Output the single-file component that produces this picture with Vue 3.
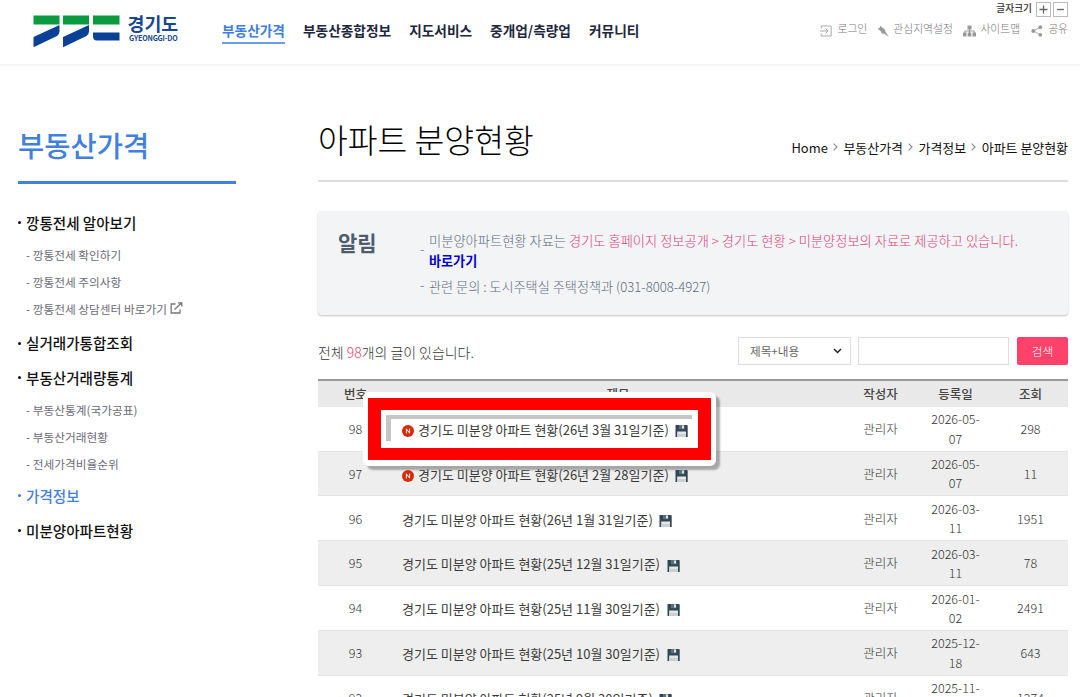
<script setup>
import { ref } from 'vue'

const menus = ['부동산가격', '부동산종합정보', '지도서비스', '중개업/측량업', '커뮤니티']

const sideMenus = [
  {
    name: '깡통전세 알아보기',
    children: [
      { name: '깡통전세 확인하기' },
      { name: '깡통전세 주의사항' },
      { name: '깡통전세 상담센터 바로가기', external: true }
    ]
  },
  { name: '실거래가통합조회' },
  {
    name: '부동산거래량통계',
    children: [
      { name: '부동산통계(국가공표)' },
      { name: '부동산거래현황' },
      { name: '전세가격비율순위' }
    ]
  },
  { name: '가격정보', active: true },
  { name: '미분양아파트현황' }
]

const crumbs = ['Home', '부동산가격', '가격정보', '아파트 분양현황']

const posts = [
  { no: 98, period: '26년 3월 31일', date: '2026-05-07', views: 298, isNew: true, marked: true },
  { no: 97, period: '26년 2월 28일', date: '2026-05-07', views: 11, isNew: true },
  { no: 96, period: '26년 1월 31일', date: '2026-03-11', views: 1951 },
  { no: 95, period: '25년 12월 31일', date: '2026-03-11', views: 78 },
  { no: 94, period: '25년 11월 30일', date: '2026-01-02', views: 2491 },
  { no: 93, period: '25년 10월 30일', date: '2025-12-18', views: 643 },
  { no: 92, period: '25년 9월 30일', date: '2025-11-03', views: 1274 }
]

const keyword = ref('')
</script>

<template>
  <div class="page">
    <header class="header">
      <a class="logo">
        <svg width="88" height="33" viewBox="0 0 88 33">
          <g fill="#0b9a3f">
            <path d="M0.5 0.5H26.5V9.5H0.5z" />
            <path d="M30 0.5H56V9.5H30z" />
            <path d="M60 0.5H86.5V9.5H60z" />
          </g>
          <g fill="#0a4197">
            <path d="M26.5 10V16.5Q26.5 19.5 24 21L0.5 32.3V22z" />
            <path d="M56 10V16.5Q56 19.5 53.5 21L30 32.3V22z" />
            <path d="M60 17.5H86.5V25.5H64Q60 25.5 60 21z" />
          </g>
        </svg>
        <span class="logo-text">
          <strong>경기도</strong>
          <em>GYEONGGI-DO</em>
        </span>
      </a>

      <nav class="gnb">
        <a v-for="(menu, i) in menus" :key="menu" :class="{ on: i === 0 }">{{ menu }}</a>
      </nav>

      <div class="util">
        <div class="font-size">
          <span>글자크기</span>
          <button><svg width="9" height="9" viewBox="0 0 9 9"><path d="M0.5 4.5h8M4.5 0.5v8" stroke="#666" stroke-width="1.3" /></svg></button>
          <button><svg width="9" height="9" viewBox="0 0 9 9"><path d="M1 4.5h7" stroke="#666" stroke-width="1.3" /></svg></button>
        </div>
        <div class="links">
          <a>
            <svg width="12" height="12" viewBox="0 0 12 12" fill="none" stroke="#aaa"><path d="M1.2 3.5V1H11.2V11H1.2V8.5M0 6H8M5.5 3.5L8 6L5.5 8.5" /></svg>
            <span>로그인</span>
          </a>
          <a class="gap-pin">
            <svg width="12" height="12" viewBox="0 0 12 12"><path d="M3.2 0.8L5.2 2.6L7.6 4.2L8.6 7L11.8 11.8L6.8 8.6L4.6 8.4L3.8 6.2L0.5 3.6L2.6 3z" fill="#999" /></svg>
            <span>관심지역설정</span>
          </a>
          <a class="gap-map">
            <svg width="13" height="12" viewBox="0 0 13 12"><path d="M4.5 0.5h4v4h-4zM0 7.5h3.5v4H0zM4.7 7.5h3.6v4H4.7zM9.5 7.5H13v4H9.5z" fill="#999" /><path d="M6.5 4v4M1.8 8V6h9.4v2" fill="none" stroke="#999" /></svg>
            <span>사이트맵</span>
          </a>
          <a class="gap-share">
            <svg width="12" height="12" viewBox="0 0 12 12"><path d="M9.3 2.2L2.5 6L9.3 9.8" fill="none" stroke="#999" stroke-width="0.8" /><g fill="#999"><circle cx="9.3" cy="2.2" r="1.9" /><circle cx="2.3" cy="6" r="2" /><circle cx="9.3" cy="9.8" r="1.9" /></g></svg>
            <span>공유</span>
          </a>
        </div>
      </div>
    </header>

    <div class="container">
      <aside class="side">
        <h2>부동산가격</h2>
        <ul class="side-list">
          <li v-for="menu in sideMenus" :key="menu.name">
            <a class="side-item" :class="{ active: menu.active }"><i></i>{{ menu.name }}</a>
            <ul v-if="menu.children" class="sub-list">
              <li v-for="child in menu.children" :key="child.name" :class="{ external: child.external }">
                - {{ child.name }}
                <svg v-if="child.external" width="13" height="12" viewBox="0 0 13 12" fill="none" stroke="#777" stroke-width="1.3"><path d="M5.5 2H1.2V11H10V7.5" /><path d="M4.5 7.5L11.5 1M8 0.8H11.8V4.6" /></svg>
              </li>
            </ul>
          </li>
        </ul>
      </aside>

      <main class="content">
        <div class="title-bar">
          <h1>아파트 분양현황</h1>
          <div class="crumbs">
            <template v-for="(crumb, i) in crumbs" :key="crumb">
              <svg v-if="i > 0" width="5" height="8" viewBox="0 0 5 8"><path d="M0.7 0.7L4 4L0.7 7.3" fill="none" stroke="#888" stroke-width="1.1" /></svg>
              <span>{{ crumb }}</span>
            </template>
          </div>
        </div>

        <section class="notice">
          <h3>알림</h3>
          <ul>
            <li>
              <span class="dash">-</span>
              <p class="wide">미분양아파트현황 자료는 <span class="pink">경기도 홈페이지 정보공개 &gt; 경기도 현황 &gt; 미분양정보의 자료로 제공하고 있습니다.</span><br><a>바로가기</a></p>
            </li>
            <li>
              <span class="dash">-</span>
              <p>관련 문의 : 도시주택실 주택정책과 (031-8008-4927)</p>
            </li>
          </ul>
        </section>

        <div class="search-bar">
          <p class="total">전체 <span>98</span>개의 글이 있습니다.</p>
          <div class="select">
            <span>제목+내용</span>
            <svg width="9" height="6" viewBox="0 0 9 6"><path d="M1 1L4.5 4.5L8 1" fill="none" stroke="#222" stroke-width="1.5" /></svg>
          </div>
          <input v-model="keyword" type="text">
          <button>검색</button>
        </div>

        <div class="board">
          <div class="row head">
            <span>번호</span><span>제목</span><span>작성자</span><span>등록일</span><span>조회</span>
          </div>
          <div v-for="post in posts" :key="post.no" class="row">
            <span>{{ post.no }}</span>
            <div class="subject">
              <svg v-if="post.isNew" class="new" width="12" height="12" viewBox="0 0 12 12"><circle cx="6" cy="6" r="6" fill="#d62b0b" /><path d="M4.4 8.4V3.8L7.6 8.2V3.6" fill="none" stroke="#fff" stroke-width="0.9" /></svg>
              <a>경기도 미분양 아파트 현황({{ post.period }}기준)</a>
              <svg class="disk" width="13" height="12" viewBox="0 0 13 12"><path d="M0.5 0H12L12.7 0.7V12H0.5z" fill="#304855" /><path d="M4 0H9.5V4.2H4z" fill="#5d717c" /><path d="M7 0.5H9V3.6H7z" fill="#dfe3e5" /><path d="M2.2 6.5H11V12H2.2z" fill="#e4e6e7" /><path d="M2.2 9H11V12H2.2z" fill="#cbd0d3" /></svg>
              <div v-if="post.marked" class="mark"><div class="mark-inner"></div></div>
            </div>
            <span>관리자</span>
            <span class="date">{{ post.date }}</span>
            <span>{{ post.views }}</span>
          </div>
        </div>
      </main>
    </div>
  </div>
</template>

<style>
body {
  margin: 0;
  background: #fff;
  overflow: hidden;
}
</style>

<style scoped>
.page {
  height: 697px;
  overflow: hidden;
  font-family: "Noto Sans CJK KR", sans-serif;
  font-size: 12.5px;
  color: #333;
}
.page * { box-sizing: border-box; }
h1, h2, h3, p, ul { margin: 0; padding: 0; }
ul { list-style: none; }
svg { flex: none; display: block; }
button { padding: 0; font-family: inherit; }

/* header */
.header {
  height: 66px;
  display: flex;
  align-items: flex-start;
  padding: 0 12px 0 33px;
  border-bottom: 2px solid #f5f5f5;
}
.logo {
  display: flex;
  width: 189px;
  padding-top: 15px;
  gap: 6.5px;
}
.logo-text {
  display: flex;
  flex-direction: column;
  margin-top: -2px;
  color: #17478f;
}
.logo-text strong {
  font-size: 18.4px;
  line-height: 20px;
  font-weight: 700;
}
.logo-text em {
  font-style: normal;
  font-weight: 700;
  font-size: 7.2px;
  line-height: 10px;
  letter-spacing: -0.2px;
  padding-left: 1.5px;
}
.gnb {
  display: flex;
  gap: 18px;
  padding-top: 18px;
}
.gnb a {
  height: 26px;
  font-size: 13.7px;
  line-height: 24px;
  font-weight: 700;
  color: #22263c;
  white-space: nowrap;
}
.gnb a.on {
  color: #3e7ee0;
  border-bottom: 2px solid #6d9ce8;
}
.util { margin-left: auto; }
.font-size {
  display: flex;
  justify-content: flex-end;
  align-items: center;
  gap: 2px;
  height: 16px;
  margin-top: 1px;
}
.font-size span {
  font-size: 9.7px;
  line-height: 14px;
  font-weight: 500;
  color: #333;
  margin: -3px 2px 0 0;
}
.font-size button {
  width: 15px;
  height: 15px;
  display: flex;
  align-items: center;
  justify-content: center;
  border: 1px solid #bbb;
  background: #fff;
}
.links {
  display: flex;
  margin-top: 3px;
}
.links a {
  display: flex;
  gap: 5px;
  font-size: 10.8px;
  line-height: 16px;
  font-weight: 300;
  color: #777;
}
.links svg { margin-top: 5px; }
.links .gap-pin { margin-left: 10px; gap: 4px; }
.links .gap-map { margin-left: 10.5px; gap: 4px; }
.links .gap-share { margin-left: 11px; }

.container {
  display: flex;
  padding: 0 12px 0 18px;
}

/* side menu */
.side {
  width: 218px;
  margin-right: 82px;
}
.side h2 {
  height: 118px;
  padding-top: 58px;
  border-bottom: 3px solid #4280de;
  font-size: 28.5px;
  line-height: 42px;
  font-weight: 500;
  color: #4280de;
}
.side-list { padding-top: 21px; }
.side-item {
  display: flex;
  align-items: center;
  height: 34.8px;
  font-size: 14.55px;
  font-weight: 500;
  color: #111;
}
.side-item i {
  width: 3px;
  height: 3px;
  margin: 1px 5px 0 0;
  border-radius: 50%;
  background: currentColor;
}
.side-item.active { color: #4280de; }
.sub-list {
  padding: 1px 0 1px 8px;
}
.sub-list li {
  display: flex;
  align-items: center;
  gap: 3px;
  height: 27px;
  font-size: 11.7px;
  color: #6b6b78;
  white-space: nowrap;
}
.sub-list li.external { margin-bottom: 2.5px; }

/* content */
.content { width: 750px; }
.title-bar {
  height: 116px;
  display: flex;
  justify-content: space-between;
  border-bottom: 2px solid #ddd;
}
.title-bar h1 {
  padding-top: 48.5px;
  font-size: 32.4px;
  line-height: 48px;
  font-weight: 300;
  color: #000;
}
.crumbs {
  display: flex;
  align-items: center;
  gap: 5.3px;
  height: 20px;
  margin-top: 71px;
  font-size: 12.95px;
  color: #111;
}

.notice {
  display: flex;
  height: 104px;
  margin-top: 29px;
  padding: 19px 0 0 20px;
  background: #f2f4f6;
  border-radius: 4px;
  box-shadow: 0 1px 2px rgba(0, 0, 0, 0.25);
  color: #5f6b7c;
}
.notice h3 {
  width: 82px;
  font-size: 21px;
  line-height: 24px;
  font-weight: 700;
  color: #4e5d6e;
}
.notice ul { padding-top: 1px; }
.notice li {
  display: flex;
  align-items: center;
  font-size: 13.15px;
  line-height: 20px;
  margin-bottom: 6px;
  font-weight: 300;
}
.notice .dash { width: 9px; margin-top: -4px; }
.notice .wide { font-size: 13.26px; }
.notice .pink { color: #e04079; }
.notice a { font-size: 13.1px; color: #0000d8; font-weight: 700; }

.search-bar {
  display: flex;
  align-items: center;
  height: 28px;
  margin-top: 22px;
}
.total {
  flex: 1;
  font-size: 13.95px;
  font-weight: 300;
  padding-top: 2px;
  color: #333;
}
.total span { color: #ea3f6b; }
.select {
  display: flex;
  align-items: center;
  justify-content: space-between;
  width: 113px;
  height: 28px;
  padding: 0 8px 0 11px;
  border: 1px solid #ddd;
  font-size: 11.6px;
  color: #666;
}
.search-bar input {
  width: 151px;
  height: 28px;
  margin: 0 8px 0 7px;
  border: 1px solid #ddd;
  outline: none;
}
.search-bar button {
  width: 51px;
  height: 28px;
  padding-bottom: 2px;
  border: 0;
  border-radius: 2px;
  background: #ff4269;
  color: #fff;
  font-size: 11.7px;
  font-weight: 300;
}

/* board */
.board {
  margin-top: 14px;
  border-top: 2px solid #999;
}
.row {
  display: grid;
  grid-template-columns: 75px 450px 75px 75px 75px;
  align-items: center;
  height: 44.85px;
  border-bottom: 1px solid #e3e3e3;
  text-align: center;
  line-height: 19.4px;
  font-weight: 300;
}
.row:nth-child(odd) { background: #eee; }
.row.head {
  height: 25.7px;
  border-bottom: 0;
  background: #e9e9e9;
  font-weight: 500;
  color: #444;
}
.date { padding: 0 12px; }
.subject {
  position: relative;
  display: flex;
  align-items: center;
  padding: 2px 0 0 9px;
  font-size: 13px;
  font-weight: 400;
  color: #3a3a3a;
}
.subject a, .subject .new, .subject .disk {
  position: relative;
  z-index: 2;
}
.new { margin: 3px 4px 0 0; }
.disk { margin: 3px 0 0 6.5px; }

/* highlight frame over the latest post */
.mark {
  position: absolute;
  left: -30px;
  top: -26px;
  z-index: 1;
  width: 353px;
  height: 74px;
  padding: 17.5px;
  border-radius: 6px;
  background: linear-gradient(#fff, #fff) center / 317px 38px no-repeat,
    linear-gradient(#f00, #f00) center / 343px 62px no-repeat, #fff;
  box-shadow: 4px 4px 2px rgba(0, 0, 0, 0.3);
}
.mark-inner {
  width: 306px;
  height: 26px;
  margin: 6px 0 0 5px;
  box-shadow: inset 5px 4px 0 #c6c6c6;
}
</style>
